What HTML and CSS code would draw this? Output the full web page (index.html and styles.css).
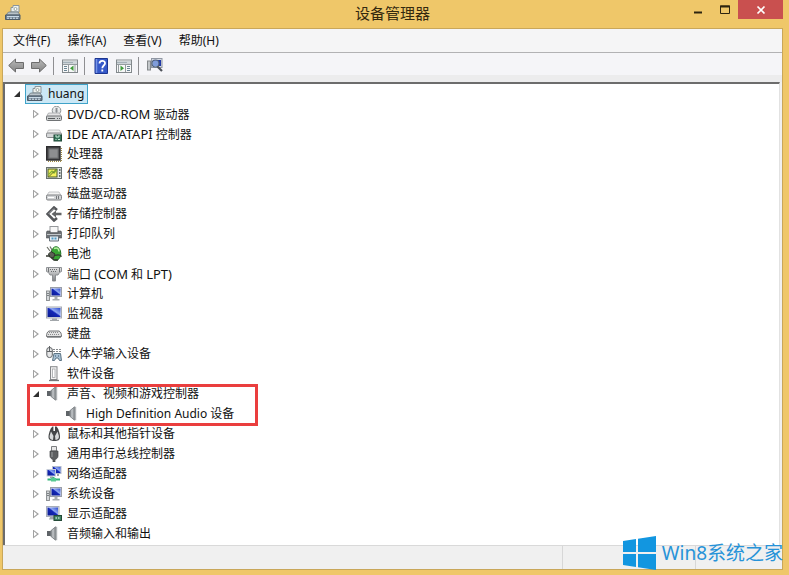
FILE: index.html
```html
<!DOCTYPE html>
<html lang="zh-CN">
<head>
<meta charset="UTF-8">
<meta name="viewport" content="width=device-width, initial-scale=1">
<title>设备管理器</title>
<link rel="stylesheet" href="styles.css">
</head>
<body>
<!-- icon set, 16x16 each -->
<svg class="sprite" aria-hidden="true">
  <defs>
    <linearGradient id="gScreen" x1="0" y1="1" x2="1" y2="0">
      <stop offset="0" stop-color="#0a1a8c"/><stop offset=".5" stop-color="#1428b8"/><stop offset=".6" stop-color="#8fa8f2"/><stop offset="1" stop-color="#2a48cc"/>
    </linearGradient>
    <linearGradient id="gMetal" x1="0" y1="0" x2="0" y2="1">
      <stop offset="0" stop-color="#e4e4e4"/><stop offset="1" stop-color="#808386"/>
    </linearGradient>
    <linearGradient id="gArrow" x1="0" y1="0" x2="0" y2="1">
      <stop offset="0" stop-color="#b9b9b9"/><stop offset="1" stop-color="#858585"/>
    </linearGradient>
    <linearGradient id="gHorn" x1="0" y1="0" x2="1" y2="0">
      <stop offset="0" stop-color="#606468"/><stop offset=".5" stop-color="#c6cacd"/><stop offset="1" stop-color="#777b7f"/>
    </linearGradient>
  </defs>

  <symbol id="i-device" viewBox="0 0 16 16">
    <path d="M6 7V2.500h2V.5h6V7z" fill="#eef2ee" stroke="#8b959a"/>
    <circle cx="10.500" cy="4" r="1.500" fill="#fff" stroke="#9aa6a0"/>
    <path d="M3.500 7h9.500l2 3H1z" fill="#b9c3c9" stroke="#6b7880" stroke-width=".8"/>
    <path d="M.5 10h14.500v4.500H.5z" fill="#6f8090" stroke="#4b5b68"/>
    <path d="M2 11.500h12" stroke="#c9dae6"/>
    <path d="M2 13.200h12" stroke="#dbe8f0" stroke-dasharray="2 1"/>
  </symbol>
  <symbol id="i-dvd" viewBox="0 0 16 16">
    <circle cx="10.500" cy="4.500" r="4.300" fill="#e3e6e7" stroke="#8e9496"/>
    <path d="M10.500 4.500L8 1.500M10.500 4.500l3-2.500" stroke="#fff"/>
    <path d="M9.500 2v4l1 1 1-1V2z" fill="#8b9093"/>
    <path d="M2.500 7h11l2 3.500H.5z" fill="#e3e4e5" stroke="#9a9c9e" stroke-width=".7"/>
    <rect x=".5" y="10" width="15" height="4.500" rx="1" fill="#cdd0d1" stroke="#707375"/>
    <path d="M2 12.500h7M11 12.500h1M13 12.500h1" stroke="#565a5c"/>
  </symbol>
  <symbol id="i-ide" viewBox="0 0 16 16">
    <path d="M2.500 4h11l2 4H.5z" fill="#f0f0f0" stroke="#adafb0" stroke-width=".7"/>
    <rect x=".5" y="7" width="15" height="4.500" rx="1.200" fill="#d5d7d8" stroke="#858789"/>
    <rect x="8" y="9" width="7.500" height="6" fill="#35755b" stroke="#1e4936"/>
    <path d="M10 9v2h3V9M9.500 13.500h1M12 13.500h2" stroke="#c8ead9" fill="none"/>
  </symbol>
  <symbol id="i-cpu" viewBox="0 0 16 16">
    <path d="M2 15.500h13.500V2" stroke="#a08b45" stroke-width="1.500" stroke-dasharray="1 1" fill="none"/>
    <rect x=".7" y=".7" width="13.300" height="13.300" fill="#4c4c4e" stroke="#2c2c2e" stroke-width="1.400"/>
    <rect x="3" y="3" width="9" height="9" fill="#8d8e90" stroke="#707274"/>
  </symbol>
  <symbol id="i-sensor" viewBox="0 0 16 16">
    <rect x=".5" y="1.500" width="15" height="11" fill="#e0e4e3" stroke="#68706e"/>
    <rect x="2" y="3" width="9" height="8" fill="#f4f15d" stroke="#4b5a25"/>
    <path d="M2.500 8.500L6 5l2 2 3-3.500" stroke="#7fae35" stroke-width="1.200" fill="none"/>
    <path d="M3 10.500L10.500 3" stroke="#5a6b25"/>
    <path d="M13 4h1.500M13 7h1.500M13 10h1.500" stroke="#38423f" stroke-width="1.500"/>
  </symbol>
  <symbol id="i-disk" viewBox="0 0 16 16">
    <path d="M3 6h10l2.500 4H.5z" fill="#f2f2f2" stroke="#b0b2b4" stroke-width=".7"/>
    <rect x=".5" y="9" width="15" height="5" rx="1.300" fill="#d2d4d6" stroke="#7e8083"/>
    <path d="M10.500 10v3M12.500 10v3" stroke="#75787b"/>
    <path d="M2 11.500h6" stroke="#fff"/>
  </symbol>
  <symbol id="i-storage" viewBox="0 0 16 16">
    <path d="M11 4L8 1.500 1.500 8 8 14.500 11 12" fill="none" stroke="#55575a" stroke-width="2.600"/>
    <path d="M8 2.500L2.500 8" stroke="#a9abad"/>
    <path d="M5.500 8L10 4.500v2.200h5.500v2.600H10v2.200z" fill="#626466"/>
  </symbol>
  <symbol id="i-printer" viewBox="0 0 16 16">
    <rect x="4" y=".5" width="8" height="6" fill="#f7f7f7" stroke="#95989b"/>
    <path d="M1 5h3v2h8V5h3l.8 2v5H.2V7z" fill="#6d7174" stroke="#4e5255" stroke-width=".6"/>
    <path d="M1 8.500h14" stroke="#c2c6c9"/>
    <path d="M3.500 10h9v5h-9z" fill="#e4eef4" stroke="#66707a"/>
    <path d="M5.500 12.500h5" stroke="#4e99c4" stroke-width="2" stroke-dasharray="2 1"/>
  </symbol>
  <symbol id="i-battery" viewBox="0 0 16 16">
    <ellipse cx="10" cy="7.500" rx="4.800" ry="6.800" fill="#39a634" stroke="#217327"/>
    <path d="M8 2.500c3-1.500 5 0 5 3" stroke="#bdf0a4" stroke-width="1.500" fill="none"/>
    <path d="M1 1l3 4M4 .5L6 4" stroke="#6c7066" stroke-width="1.200"/>
    <path d="M2.500 8l2.500-2.500 4 2.500-1.500 4-4-1z" fill="#5c6155" stroke="#2f332b"/>
    <path d="M0 10h4M9 9.500c3-1 5-1 6.500 1M5 11.500l3 2.500h4" stroke="#343830" stroke-width="1.300" fill="none"/>
  </symbol>
  <symbol id="i-port" viewBox="0 0 16 16">
    <path d="M.5 1.500h15v4l-2 1L12 9H9.500v6h-3V9H4L2.500 6.500l-2-1z" fill="url(#gMetal)" stroke="#85888b" stroke-width=".9"/>
    <path d="M4 3.500h8M5 5.500h6" stroke="#6a6d70" stroke-dasharray="1 1"/>
    <path d="M2.500 2v4M13.500 2v4" stroke="#727578"/>
  </symbol>
  <symbol id="i-computer" viewBox="0 0 16 16">
    <rect x=".5" y="5" width="3" height="9.500" fill="#d5d8da" stroke="#85898c" stroke-width=".9"/>
    <path d="M1 7.500h2M1 9.500h2" stroke="#7b8083"/>
    <rect x="4.500" y="1.500" width="11" height="9" fill="#e0e3e8" stroke="#9a9fa8"/>
    <rect x="5.500" y="2.500" width="9" height="7" fill="url(#gScreen)"/>
    <path d="M8.500 11h3v2h2v1.500H6.500V13h2z" fill="#a9adb1"/>
  </symbol>
  <symbol id="i-monitor" viewBox="0 0 16 16">
    <rect x=".5" y="1" width="15" height="11" fill="#e3e6eb" stroke="#a7acb5"/>
    <rect x="1.500" y="2" width="13" height="9" fill="url(#gScreen)"/>
    <path d="M6 12.500h5v1.200h2V15H4v-1.300h2z" fill="#a2a6aa"/>
  </symbol>
  <symbol id="i-keyboard" viewBox="0 0 16 16">
    <path d="M3 5h10c2 1 2.500 3 2.500 5.500H.5C.5 8 1 6 3 5z" fill="#e2e2e2" stroke="#727476"/>
    <path d="M3 6.500h10M2 8.500h12" stroke="#8a8c8e" stroke-dasharray="1 1"/>
    <path d="M1 11.500h14" stroke="#9fa1a3"/>
  </symbol>
  <symbol id="i-hid" viewBox="0 0 16 16">
    <rect x=".8" y="1.500" width="5.500" height="10" rx="2.500" fill="#e6e7e8" stroke="#606366"/>
    <path d="M3.500 0v6M1 5.500h5" stroke="#606366"/>
    <path d="M7 3.500h8.500M7 5.500h8.500" stroke="#85888b" stroke-dasharray="2 1"/>
    <path d="M8 7.500h6.500l1 7h-2L12 12h-2l-1.500 2.500h-2z" fill="#a7c0d3" stroke="#5d7484"/>
    <path d="M9 10h1M12 10h1" stroke="#34516a"/>
  </symbol>
  <symbol id="i-software" viewBox="0 0 16 16">
    <rect x="4.500" y=".7" width="6.500" height="12.800" fill="#f1f1f1" stroke="#86888a"/>
    <rect x="6.500" y="3" width="2.500" height="8.500" fill="#fff" stroke="#a4a6a8" stroke-width=".8"/>
    <path d="M3 14.500h10" stroke="#75777a" stroke-width="1.300"/>
  </symbol>
  <symbol id="i-sound" viewBox="0 0 16 16">
    <path d="M1 5h4v5H1z" fill="#5f6468"/>
    <path d="M4.500 5L9.500.8v13.400L4.500 10z" fill="url(#gHorn)" stroke="#74787c" stroke-width=".8"/>
    <path d="M10.500 .8v13.400" stroke="#b0b3b6" stroke-width="1.400"/>
  </symbol>
  <symbol id="i-mouse" viewBox="0 0 16 16">
    <path d="M6.500.5h4c2 2 3.500 7 3.500 10.500 0 3-2 4-5.500 4S2.500 14 2.500 11C2.500 8 4 2.500 6.500.5z" fill="#434547"/>
    <path d="M5 5.500L7.500 10 7 14C4 13.500 3.200 12 3.700 9.500zM11.500 5.500L9 10l.5 4c3-.5 3.800-2 3.300-4.500z" fill="#d7d9da"/>
    <path d="M8.200 0v5" stroke="#fff" stroke-width="1.600"/>
  </symbol>
  <symbol id="i-usb" viewBox="0 0 16 16">
    <path d="M5.500.5h5V5h-5z" fill="#e8e8e8" stroke="#7c7e80"/>
    <path d="M4 5h8v5c0 2-1.500 3-3 3.500V16H7v-2.500C5.500 13 4 12 4 10z" fill="#5e6062" stroke="#434547" stroke-width=".7"/>
    <path d="M6 6v5" stroke="#9da0a2"/>
  </symbol>
  <symbol id="i-network" viewBox="0 0 16 16">
    <rect x="6.500" y=".5" width="8.500" height="7" fill="url(#gScreen)" stroke="#b4bccb"/>
    <rect x="1" y="3.500" width="8.500" height="6.500" fill="url(#gScreen)" stroke="#c5ccd9"/>
    <path d="M4 10.500h3v1.500H4zM11 8h2v2h-2z" fill="#9ea4aa"/>
    <path d="M1.500 13.500h12.500M7.500 11v3" stroke="#35b57a" stroke-width="2"/>
    <path d="M5 12h5v3.500H5z" fill="#58ca92"/>
  </symbol>
  <symbol id="i-display" viewBox="0 0 16 16">
    <rect x=".5" y=".5" width="12.500" height="10" fill="#e1e4ea" stroke="#a8aeb8"/>
    <rect x="1.500" y="1.500" width="10.500" height="8" fill="url(#gScreen)"/>
    <path d="M4 11h5v2.500H3z" fill="#a3a8ad"/>
    <rect x="8" y="9.500" width="7.500" height="5" fill="#3f8060" stroke="#234a37"/>
    <path d="M9.500 12h4.500" stroke="#b8dcc9" stroke-width="1.500" stroke-dasharray="1.500 1"/>
  </symbol>

  <symbol id="t-back" viewBox="0 0 16 16">
    <path d="M.7 7.500L7.500 1v3.500h8v6h-8V14z" fill="url(#gArrow)" stroke="#6c6c6c"/>
  </symbol>
  <symbol id="t-forward" viewBox="0 0 16 16">
    <path d="M15.300 7.500L8.500 1v3.500h-8v6h8V14z" fill="url(#gArrow)" stroke="#6c6c6c"/>
  </symbol>
  <symbol id="t-tree" viewBox="0 0 16 16">
    <rect x=".5" y="2" width="15" height="12.500" fill="#f7f8f8" stroke="#83898c"/>
    <path d="M1 4.500h14" stroke="#a5b1b8" stroke-width="2"/>
    <path d="M11.500 4.500h1M13.500 4.500h1" stroke="#fff"/>
    <path d="M1 6.500h14M6.500 6v8M13 6v8" stroke="#969ca0"/>
    <path d="M2 8.500h3M2 10.500h3M2 12.500h3" stroke="#6c8493"/>
    <path d="M11.500 7.500v5.500L8 10.300z" fill="#3e9b3a"/>
  </symbol>
  <symbol id="t-help" viewBox="0 0 16 16">
    <path d="M2 .5h12.500v15H2z" fill="#3558c8" stroke="#1c3590"/>
    <path d="M3.500 1v14" stroke="#7794e6" stroke-width="1.500"/>
    <path d="M6.500 5.500C6.500 2 12 2 12 5.200 12 7.500 9.300 7.500 9.300 10.200M9.300 11.500v2" stroke="#fff" stroke-width="1.800" fill="none"/>
  </symbol>
  <symbol id="t-action" viewBox="0 0 16 16">
    <rect x=".5" y="2" width="15" height="12.500" fill="#f7f8f8" stroke="#83898c"/>
    <path d="M1 4.500h14" stroke="#a5b1b8" stroke-width="2"/>
    <path d="M11.500 4.500h1M13.500 4.500h1" stroke="#fff"/>
    <path d="M1 6.500h14M9.500 6v8M2.500 6v8" stroke="#969ca0"/>
    <path d="M11 8.500h3M11 10.500h3M11 12.500h3" stroke="#6c8493"/>
    <path d="M4.500 7.500v5.500L8 10.300z" fill="#3e9b3a"/>
  </symbol>
  <symbol id="t-scan" viewBox="0 0 16 16">
    <rect x=".5" y="3" width="3" height="9" fill="#c3c7ca" stroke="#85898c"/>
    <rect x="4.500" y=".5" width="10.500" height="9" fill="#d6dbe4" stroke="#9097a3"/>
    <rect x="6" y="2" width="8" height="6" fill="#2038a8"/>
    <circle cx="8.500" cy="5.500" r="3.500" fill="#a8c8ef" fill-opacity=".7" stroke="#50627c" stroke-width="1.200"/>
    <path d="M10.500 8.500l4.500 4.500" stroke="#4d5259" stroke-width="2.200"/>
  </symbol>
</svg>

<div class="window">
  <header class="titlebar">
    <svg class="icon app-icon"><use href="#i-device"/></svg>
    <h1 class="title">设备管理器</h1>
    <div class="controls">
      <button class="ctl" aria-label="最小化"><svg width="10" height="10"><path d="M1 7.500h8" stroke="#2d2410" stroke-width="2"/></svg></button>
      <button class="ctl" aria-label="最大化"><svg width="10" height="10"><path d="M.5 1h9v7.500h-9z" fill="none" stroke="#2d2410"/><path d="M0 1.500h10" stroke="#2d2410" stroke-width="2"/></svg></button>
      <button class="ctl close" aria-label="关闭"><svg width="10" height="10"><path d="M1.500 1.500l7 7M8.500 1.500l-7 7" stroke="#fff" stroke-width="1.700"/></svg></button>
    </div>
  </header>

  <div class="client">
    <nav class="menubar">
      <button>文件(F)</button>
      <button>操作(A)</button>
      <button>查看(V)</button>
      <button>帮助(H)</button>
    </nav>

    <div class="toolbar">
      <div class="group">
        <button aria-label="后退"><svg class="icon"><use href="#t-back"/></svg></button>
        <button aria-label="前进"><svg class="icon"><use href="#t-forward"/></svg></button>
      </div>
      <div class="group">
        <button aria-label="显示/隐藏控制台树"><svg class="icon"><use href="#t-tree"/></svg></button>
      </div>
      <div class="group">
        <button aria-label="帮助"><svg class="icon"><use href="#t-help"/></svg></button>
        <button aria-label="显示/隐藏操作窗格"><svg class="icon"><use href="#t-action"/></svg></button>
      </div>
      <div class="group">
        <button aria-label="扫描检测硬件改动"><svg class="icon"><use href="#t-scan"/></svg></button>
      </div>
    </div>

    <main class="pane">
      <ul class="tree">
        <li>
          <div class="row"><button class="toggle open" aria-label="折叠"></button><span class="node selected"><svg class="icon"><use href="#i-device"/></svg>huang</span></div>
          <ul>
            <li><div class="row"><button class="toggle" aria-label="展开"></button><span class="node"><svg class="icon"><use href="#i-dvd"/></svg><span><span class="latin">DVD/CD-ROM</span> 驱动器</span></span></div></li>
            <li><div class="row"><button class="toggle" aria-label="展开"></button><span class="node"><svg class="icon"><use href="#i-ide"/></svg><span><span class="latin">IDE ATA/ATAPI</span> 控制器</span></span></div></li>
            <li><div class="row"><button class="toggle" aria-label="展开"></button><span class="node"><svg class="icon"><use href="#i-cpu"/></svg>处理器</span></div></li>
            <li><div class="row"><button class="toggle" aria-label="展开"></button><span class="node"><svg class="icon"><use href="#i-sensor"/></svg>传感器</span></div></li>
            <li><div class="row"><button class="toggle" aria-label="展开"></button><span class="node"><svg class="icon"><use href="#i-disk"/></svg>磁盘驱动器</span></div></li>
            <li><div class="row"><button class="toggle" aria-label="展开"></button><span class="node"><svg class="icon"><use href="#i-storage"/></svg>存储控制器</span></div></li>
            <li><div class="row"><button class="toggle" aria-label="展开"></button><span class="node"><svg class="icon"><use href="#i-printer"/></svg>打印队列</span></div></li>
            <li><div class="row"><button class="toggle" aria-label="展开"></button><span class="node"><svg class="icon"><use href="#i-battery"/></svg>电池</span></div></li>
            <li><div class="row"><button class="toggle" aria-label="展开"></button><span class="node"><svg class="icon"><use href="#i-port"/></svg><span>端口 <span class="latin">(COM</span> 和 <span class="latin">LPT)</span></span></span></div></li>
            <li><div class="row"><button class="toggle" aria-label="展开"></button><span class="node"><svg class="icon"><use href="#i-computer"/></svg>计算机</span></div></li>
            <li><div class="row"><button class="toggle" aria-label="展开"></button><span class="node"><svg class="icon"><use href="#i-monitor"/></svg>监视器</span></div></li>
            <li><div class="row"><button class="toggle" aria-label="展开"></button><span class="node"><svg class="icon"><use href="#i-keyboard"/></svg>键盘</span></div></li>
            <li><div class="row"><button class="toggle" aria-label="展开"></button><span class="node"><svg class="icon"><use href="#i-hid"/></svg>人体学输入设备</span></div></li>
            <li><div class="row"><button class="toggle" aria-label="展开"></button><span class="node"><svg class="icon"><use href="#i-software"/></svg>软件设备</span></div></li>
            <li class="marked">
              <div class="row"><button class="toggle open" aria-label="折叠"></button><span class="node"><svg class="icon"><use href="#i-sound"/></svg>声音、视频和游戏控制器</span></div>
              <ul>
                <li><div class="row"><span class="toggle-space"></span><span class="node"><svg class="icon"><use href="#i-sound"/></svg>High Definition Audio 设备</span></div></li>
              </ul>
            </li>
            <li><div class="row"><button class="toggle" aria-label="展开"></button><span class="node"><svg class="icon"><use href="#i-mouse"/></svg>鼠标和其他指针设备</span></div></li>
            <li><div class="row"><button class="toggle" aria-label="展开"></button><span class="node"><svg class="icon"><use href="#i-usb"/></svg>通用串行总线控制器</span></div></li>
            <li><div class="row"><button class="toggle" aria-label="展开"></button><span class="node"><svg class="icon"><use href="#i-network"/></svg>网络适配器</span></div></li>
            <li><div class="row"><button class="toggle" aria-label="展开"></button><span class="node"><svg class="icon"><use href="#i-computer"/></svg>系统设备</span></div></li>
            <li><div class="row"><button class="toggle" aria-label="展开"></button><span class="node"><svg class="icon"><use href="#i-display"/></svg>显示适配器</span></div></li>
            <li><div class="row"><button class="toggle" aria-label="展开"></button><span class="node"><svg class="icon"><use href="#i-sound"/></svg>音频输入和输出</span></div></li>
          </ul>
        </li>
      </ul>
    </main>

    <footer class="statusbar"><span></span><span></span><span></span></footer>
  </div>

  <div class="brand">
    <svg width="33" height="34" viewBox="0 0 33 34"><path d="M0 5l13-2v13H0zM15 2.700L33 0v16H15zM0 18h13v13L0 29zM15 18h18v16l-18-2.700z" fill="#1296e0"/></svg>
    <span>Win8系统之家</span>
  </div>
</div>
</body>
</html>
```
FILE: styles.css
```css
*, *::before, *::after { box-sizing: border-box; }
body { margin: 0; font: 12px/20px "Noto Sans", "Noto Sans CJK SC", sans-serif; color: #111; }
button { margin: 0; padding: 0; border: 0; background: none; font: inherit; color: inherit; }
ul { list-style: none; margin: 0; padding: 0; }
svg { display: block; flex: none; }
.sprite { position: absolute; width: 0; height: 0; }
.icon { width: 16px; height: 16px; }

.window { position: relative; display: flex; flex-direction: column; min-height: 100vh; padding: 0 6px 5px 2px; background: #efc769; }

/* title bar */
.titlebar { display: grid; grid-template-columns: 1fr auto 1fr; height: 28px; }
.app-icon { margin: 5px 0 0 3px; }
.title { margin: 0; padding-top: 3px; font-size: 15px; font-weight: 400; line-height: 20px; color: #33290f; }
.controls { display: flex; justify-content: flex-end; align-items: flex-start; }
.ctl { display: flex; align-items: center; justify-content: center; width: 27px; height: 19px; }
.close { width: 45px; background: #c9504f; }

/* client area */
.client { flex: 1; display: flex; flex-direction: column; border: 1px solid #c9a75a; background: #f0f0f0; }
.menubar { display: flex; gap: 17px; height: 24px; padding: 2px 10px; background: #f5f5f6; border-bottom: 1px solid #b2b2b4; }
.toolbar { display: flex; height: 29px; padding: 4px 5px; background: linear-gradient(#f5f5f8 22px, #ececed 22px); }
.group { display: flex; gap: 7px; height: 18px; padding-right: 6px; align-items: center; }
.group + .group { padding-left: 8px; border-left: 1px solid #8f8f92; }

.pane { flex: 1; margin-right: 2px; padding-left: 4px; background: #fff; border: solid #6c6c6c; border-width: 2px 0 0 2px; border-right: 1px solid #e2e2e2; }
.tree ul { padding-left: 19px; }
.row { display: flex; height: 20px; }
.toggle, .toggle-space { flex: none; width: 16px; height: 20px; }
.toggle::before { content: ""; display: block; width: 6px; height: 9px; margin: 0 auto; background: #a2a2a2; clip-path: polygon(0 0, 100% 50%, 0 100%, 0 0, 1px 2px, 1px 7px, 4px 50%, 1px 2px); }
.toggle.open::before { height: 6px; background: #303030; clip-path: polygon(100% 0, 100% 100%, 0 100%); }
.node { display: flex; align-items: center; gap: 5px; padding: 0 3px 0 1px; border: 1px solid transparent; white-space: nowrap; }
.node.selected { background: #cbe8f6; border-color: #3fa3c9; }
.latin { font-size: 13px; }

.marked { position: relative; }
.marked::after { content: ""; position: absolute; left: -1px; top: 0; width: 231px; height: 42px; border: 3px solid #ea3e3e; pointer-events: none; }

.statusbar { display: flex; justify-content: flex-end; height: 24px; border-top: 1px solid #d9d9d9; }
.statusbar span { width: 133px; border-left: 1px solid #d7d7d7; }
.statusbar span:first-child { flex: 1; border: 0; }
.statusbar span:last-child { width: 87px; }

/* site mark over the corner */
.brand { position: absolute; right: 6px; bottom: 5px; display: flex; align-items: center; gap: 6px; font-size: 19px; line-height: 34px; color: #2793d8; white-space: nowrap; }
```
